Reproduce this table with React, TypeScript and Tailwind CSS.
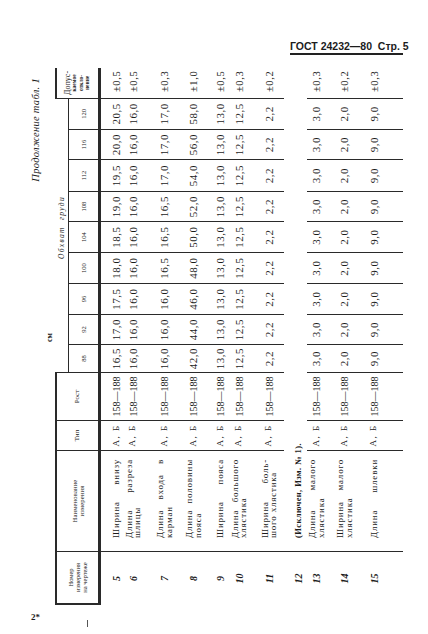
import React from "react";

type Row = {
  no: string;
  name: string[];
  values: string[];
  tol: string;
  cell: string;
  excluded?: boolean;
};

const same = (v: string) => Array(9).fill(v) as string[];

const chest = ["88", "92", "96", "100", "104", "108", "112", "116", "120"];

const colWidths = [
  "w-[53px]",
  "w-[101px]",
  "w-[30px]",
  "w-[48px]",
  "w-[28px]",
  "w-[30px]",
  "w-[31px]",
  "w-[31px]",
  "w-[31px]",
  "w-[30px]",
  "w-[32px]",
  "w-[30px]",
  "w-[31px]",
  "w-[31px]",
];

// cell = height + padding of every cell in the row, so the row's middle lands where the scan has it
const rows: Row[] = [
  {
    no: "5",
    name: ["Ширина внизу"],
    values: ["16,5", "17,0", "17,5", "18,0", "18,5", "19,0", "19,5", "20,0", "20,5"],
    tol: "±0,5",
    cell: "h-[22px] pt-[8px]",
  },
  {
    no: "6",
    name: ["Длина разреза", "шлицы"],
    values: same("16,0"),
    tol: "±0,5",
    cell: "h-[26px] pb-[8px]",
  },
  {
    no: "7",
    name: ["Длина входа в", "карман"],
    values: ["16,0", "16,0", "16,0", "16,5", "16,5", "16,5", "17,0", "17,0", "17,0"],
    tol: "±0,3",
    cell: "h-[29px]",
  },
  {
    no: "8",
    name: ["Длина половины", "пояса"],
    values: ["42,0", "44,0", "46,0", "48,0", "50,0", "52,0", "54,0", "56,0", "58,0"],
    tol: "±1,0",
    cell: "h-[29px]",
  },
  {
    no: "9",
    name: ["Ширина пояса"],
    values: same("13,0"),
    tol: "±0,5",
    cell: "h-[21px] pt-[4px]",
  },
  {
    no: "10",
    name: ["Длина большого", "хлястика"],
    values: same("12,5"),
    tol: "±0,3",
    cell: "h-[25px] pb-[5px]",
  },
  {
    no: "11",
    name: ["Ширина боль-", "шого хлястика"],
    values: same("2,2"),
    tol: "±0,2",
    cell: "h-[30px]",
  },
  {
    no: "12",
    name: ["(Исключен, Изм. № 1)."],
    values: [],
    tol: "",
    cell: "h-[23px] pt-[5px]",
    excluded: true,
  },
  {
    no: "13",
    name: ["Длина малого", "хлястика"],
    values: same("3,0"),
    tol: "±0,3",
    cell: "h-[24px] pb-[5px]",
  },
  {
    no: "14",
    name: ["Ширина малого", "хлястика"],
    values: same("2,0"),
    tol: "±0,2",
    cell: "h-[27px]",
  },
  {
    no: "15",
    name: ["Длина шлевки"],
    values: same("9,0"),
    tol: "±0,3",
    cell: "h-[45px] pb-[13px]",
  },
];

const line = "border-[#2a2a2a]";

function Name({ lines }: { lines: string[] }) {
  const [first, ...rest] = lines;
  return (
    <div className="pl-[13px] pr-[8px] text-left text-[9px] leading-[8.5px] tracking-[0.8px]">
      <div className="flex justify-between">
        {first.split(" ").map((w, i) => (
          <span key={i}>{w}</span>
        ))}
      </div>
      {rest.map((r) => (
        <div key={r}>{r}</div>
      ))}
    </div>
  );
}

function SizeTable() {
  return (
    <table
      className={`ml-[5px] w-[537px] table-fixed border-separate border-spacing-0 ${line}`}
    >
      <colgroup>
        {colWidths.map((w, i) => (
          <col key={i} className={w} />
        ))}
      </colgroup>
      <thead>
        <tr className="h-[14px]">
          <th
            rowSpan={2}
            className={`border-t-2 border-l-2 border-b-[3px] ${line} p-0 align-middle text-[6.5px] font-normal leading-[7px]`}
          >
            Номер
            <br />
            измерения
            <br />
            на чертеже
          </th>
          <th
            rowSpan={2}
            className={`border-t-2 border-l border-b-[3px] ${line} p-0 align-middle text-[6.5px] font-normal leading-[7px] tracking-[0.2px]`}
          >
            Наименование
            <br />
            измерения
          </th>
          <th
            rowSpan={2}
            className={`border-t-2 border-l border-b-[3px] ${line} p-0 align-middle text-[7px] font-normal`}
          >
            Тип
          </th>
          <th
            rowSpan={2}
            className={`border-t-2 border-l border-b-[3px] ${line} p-0 align-middle text-[7px] font-normal`}
          >
            Рост
          </th>
          <th
            colSpan={9}
            className={`border-l border-b ${line} p-0 pl-[16px] align-middle text-[7.5px] font-normal italic leading-[13px] tracking-[1.3px]`}
          >
            Обхват&nbsp;&nbsp;груди
          </th>
          <th
            rowSpan={2}
            className={`border-t-2 border-l border-b-[3px] ${line} p-0 align-middle font-normal leading-[6.5px]`}
          >
            <div className="text-[8px] leading-[7px]">Допус-</div>
            <div className="text-[5.5px] font-bold">каемое</div>
            <div className="text-[5.5px] font-bold">откло-</div>
            <div className="text-[5.5px] font-bold">нение</div>
          </th>
        </tr>
        <tr className="h-[32px]">
          {chest.map((c) => (
            <th
              key={c}
              className={`border-l border-b-[3px] ${line} p-0 align-middle text-[6.5px] font-normal`}
            >
              {c}
            </th>
          ))}
        </tr>
      </thead>
      <tbody>
        {rows.map((r) =>
          r.excluded ? (
            <tr key={r.no}>
              <td
                className={`${r.cell} p-0 text-center align-middle text-[10px] font-semibold italic`}
              >
                {r.no}
              </td>
              <td
                colSpan={13}
                className={`${r.cell} border-l ${line} p-0 pl-[13px] align-middle text-[8.5px] font-bold tracking-[0.4px]`}
              >
                {r.name[0]}
              </td>
            </tr>
          ) : (
            <tr key={r.no}>
              <td
                className={`${r.cell} px-0 text-center align-middle text-[10px] font-semibold italic`}
              >
                {r.no}
              </td>
              <td className={`${r.cell} border-l ${line} px-0 align-middle`}>
                <Name lines={r.name} />
              </td>
              <td
                className={`${r.cell} border-l ${line} px-0 text-center align-middle text-[9px] tracking-[1.5px]`}
              >
                А,&nbsp;Б
              </td>
              <td
                className={`${r.cell} border-l ${line} px-0 text-center align-middle text-[10px] leading-[11px]`}
              >
                158—188
              </td>
              {r.values.map((v, i) => (
                <td
                  key={i}
                  className={`${r.cell} border-l ${line} px-0 text-center align-middle text-[11px] leading-[11px] tracking-[0.5px]`}
                >
                  {v}
                </td>
              ))}
              <td
                className={`${r.cell} border-l ${line} px-0 pl-[3px] text-center align-middle text-[10.5px] leading-[11px] tracking-[0.6px]`}
              >
                {r.tol}
              </td>
            </tr>
          ),
        )}
      </tbody>
    </table>
  );
}

export default function App() {
  return (
    <div className="flex h-[634px] w-[428px] flex-col overflow-hidden bg-white font-['Liberation_Serif',serif] text-[#1c1c1c]">
      <header className="flex h-[55px] items-end justify-end pr-[25px]">
        <div className="w-[113px] whitespace-nowrap border-b-2 border-[#222] pb-[1px] text-right font-['Liberation_Sans',sans-serif] text-[10.5px] font-bold leading-[11px]">
          ГОСТ 24232—80&nbsp;&nbsp;Стр.&nbsp;5
        </div>
      </header>

      {/* the page is printed sideways: lay the table out upright, then turn it */}
      <div className="mt-[5px] flex pl-[28px]">
        <div className="flex h-[550px] w-[380px] items-center justify-center">
          <div className="flex h-[380px] w-[550px] shrink-0 -rotate-90 flex-col">
            <div className="flex h-[16px] items-center justify-end pr-[18px] text-[10.5px] italic tracking-[0.3px]">
              Продолжение табл. 1
            </div>
            <div className="h-[11px] pl-[268px] text-[8px] font-bold leading-[11px]">
              см
            </div>
            <SizeTable />
          </div>
        </div>
      </div>

      <div className="flex items-start pt-[3px]">
        <div className="w-[87px] pl-[31px] text-[9px] font-bold leading-[9px]">
          2*
        </div>
        <div className="mt-[7px] h-[7px] w-px bg-[#555]" />
      </div>
    </div>
  );
}
